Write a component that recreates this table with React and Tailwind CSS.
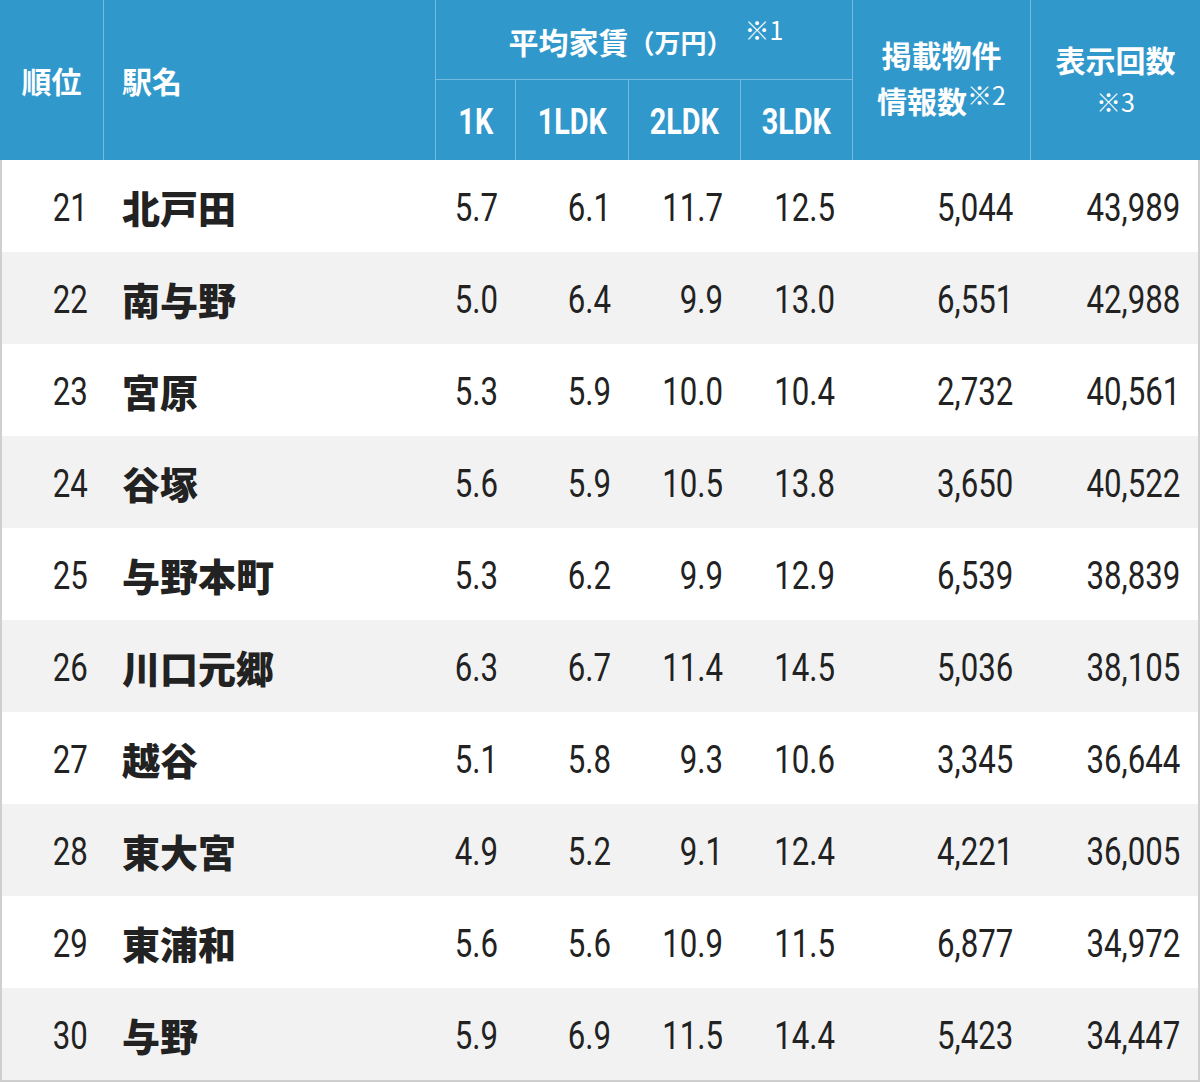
import React from "react";

const rows = [
  ["21", "北戸田", "5.7", "6.1", "11.7", "12.5", "5,044", "43,989"],
  ["22", "南与野", "5.0", "6.4", "9.9", "13.0", "6,551", "42,988"],
  ["23", "宮原", "5.3", "5.9", "10.0", "10.4", "2,732", "40,561"],
  ["24", "谷塚", "5.6", "5.9", "10.5", "13.8", "3,650", "40,522"],
  ["25", "与野本町", "5.3", "6.2", "9.9", "12.9", "6,539", "38,839"],
  ["26", "川口元郷", "6.3", "6.7", "11.4", "14.5", "5,036", "38,105"],
  ["27", "越谷", "5.1", "5.8", "9.3", "10.6", "3,345", "36,644"],
  ["28", "東大宮", "4.9", "5.2", "9.1", "12.4", "4,221", "36,005"],
  ["29", "東浦和", "5.6", "5.6", "10.9", "11.5", "6,877", "34,972"],
  ["30", "与野", "5.9", "6.9", "11.5", "14.4", "5,423", "34,447"],
];

const cols = "grid-cols-[104px_332px_80px_113px_112px_112px_178px_169px]";
const bodyCols = "grid-cols-[102px_332px_80px_113px_112px_112px_178px_167px]";
const jp = "font-['Noto_Sans_CJK_JP','Noto_Sans',sans-serif]";
const num = "font-['Roboto','Liberation_Sans',sans-serif]";

function Num({ children }) {
  return (
    <span className={`inline-block origin-right scale-x-[0.8] ${num} font-normal text-[39px] leading-none`}>
      {children}
    </span>
  );
}

function HeadCell({ children, className = "" }) {
  return (
    <div className={`flex items-center justify-center border-r border-[#74b9e0] ${className}`}>
      {children}
    </div>
  );
}

export default function App() {
  return (
    <div className="w-[1200px] bg-white">
      <div className={`grid ${cols} grid-rows-[80px_80px] bg-[#3198cc] text-white ${jp} font-bold`}>
        <HeadCell className="row-span-2 text-[30px]">順位</HeadCell>
        <div className="row-span-2 flex items-center pl-[18px] border-r border-[#74b9e0] text-[30px]">
          駅名
        </div>
        <div className="col-span-4 flex items-center justify-center border-r border-b border-[#74b9e0] pt-1 pl-1">
          <span className="text-[30px]">平均家賃</span>
          <span className="text-[26px]">（万円）</span>
          <span className="relative -top-3 ml-3 text-[25px] font-normal">※1</span>
        </div>
        <div className="row-span-2 flex flex-col items-center justify-center border-r border-[#74b9e0] text-[30px] leading-[46px] pb-1">
          <span>掲載物件</span>
          <span>
            情報数<span className="relative -top-2 text-[25px] font-normal">※2</span>
          </span>
        </div>
        <div className="row-span-2 flex flex-col items-center justify-center text-[30px] leading-[46px] pb-1">
          <span>表示回数</span>
          <span className="text-[25px] font-normal leading-[38px]">※3</span>
        </div>
        {["1K", "1LDK", "2LDK", "3LDK"].map((t) => (
          <HeadCell key={t} className="pt-1">
            <span className={`inline-block scale-x-[0.8] ${num} font-bold text-[36px] leading-none`}>{t}</span>
          </HeadCell>
        ))}
      </div>
      <div className="border-x-2 border-b-2 border-[#cfcfcf]">
        {rows.map((r, i) => (
          <div
            key={r[0]}
            className={`grid ${bodyCols} h-[92px] pt-1 text-[#222] ${i % 2 ? "bg-[#f2f2f2]" : "bg-white"}`}
          >
            <div className="flex items-center justify-end pr-[16px]">
              <Num>{r[0]}</Num>
            </div>
            <div className={`flex items-center pl-[18px] ${jp} font-black text-[38px] pb-1`}>{r[1]}</div>
            {r.slice(2).map((v, j) => (
              <div key={j} className="flex items-center justify-end pr-[18px]">
                <Num>{v}</Num>
              </div>
            ))}
          </div>
        ))}
      </div>
    </div>
  );
}
